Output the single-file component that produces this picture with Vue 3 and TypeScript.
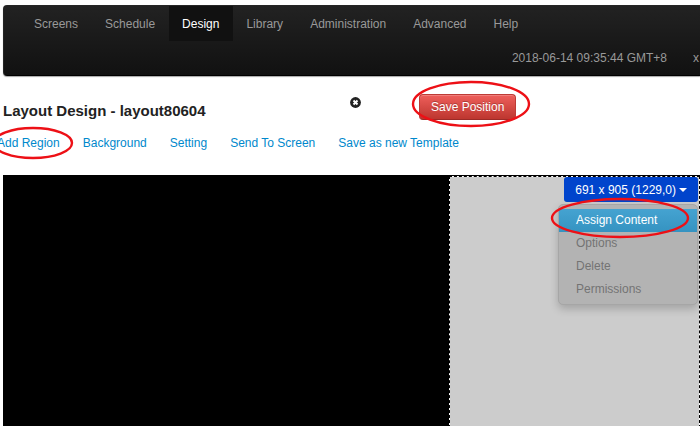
<script setup lang="ts">
import { ref } from 'vue'

const navItems: string[] = ['Screens', 'Schedule', 'Design', 'Library', 'Administration', 'Advanced', 'Help']
const activeNav = ref('Design')

const actions: string[] = ['Add Region', 'Background', 'Setting', 'Send To Screen', 'Save as new Template']

const regionMenu: string[] = ['Assign Content', 'Options', 'Delete', 'Permissions']
const activeOption = ref('Assign Content')
const menuOpen = ref(true)
</script>

<template>
  <div class="page">
    <header class="navbar">
      <nav class="nav">
        <a
          v-for="item in navItems"
          :key="item"
          href="#"
          class="nav-link"
          :class="{ active: item === activeNav }"
          @click.prevent="activeNav = item"
        >{{ item }}</a>
      </nav>
      <div class="status">
        <span>2018-06-14 09:35:44 GMT+8</span>
        <a href="#" class="user">x</a>
      </div>
    </header>

    <div class="title-row">
      <h1>Layout Design - layout80604</h1>
      <button class="close" type="button" aria-label="Close">
        <svg width="11" height="11" viewBox="0 0 11 11">
          <circle cx="5.5" cy="5.5" r="5.4" fill="#222" />
          <path d="M3.5 3.5 7.5 7.5M7.5 3.5 3.5 7.5" stroke="#fff" stroke-width="2" />
        </svg>
      </button>
      <div class="save-wrap">
        <button class="save" type="button">Save Position</button>
        <svg class="mark mark-save" viewBox="0 0 120 48">
          <ellipse cx="60" cy="24" rx="58" ry="22" />
        </svg>
      </div>
    </div>

    <nav class="actions">
      <a v-for="action in actions" :key="action" href="#" @click.prevent>{{ action }}</a>
      <svg class="mark mark-add" viewBox="0 0 82 34">
        <ellipse cx="41" cy="17" rx="39" ry="15" />
      </svg>
    </nav>

    <main class="canvas">
      <section class="region">
        <button class="region-toggle" type="button" :aria-expanded="menuOpen" @click="menuOpen = !menuOpen">
          691 x 905 (1229,0)
          <span class="caret"></span>
        </button>
        <div v-if="menuOpen" class="menu">
          <a
            v-for="option in regionMenu"
            :key="option"
            href="#"
            :class="{ active: option === activeOption }"
            @click.prevent="activeOption = option"
          >{{ option }}</a>
        </div>
        <svg class="mark mark-assign" viewBox="0 0 140 42">
          <ellipse cx="70" cy="21" rx="68" ry="19" />
        </svg>
      </section>
    </main>
  </div>
</template>

<style>
body {
  background: #fff;
  overflow: hidden;
}
</style>

<style scoped>
.page {
  box-sizing: border-box;
  display: flex;
  flex-direction: column;
  min-height: 100vh;
  padding: 5px 0 0 3px;
  font: 12px/18px "Liberation Sans", Arial, sans-serif;
  color: #333;
}

a {
  text-decoration: none;
}

button {
  font: inherit;
  cursor: pointer;
}

.navbar {
  box-sizing: border-box;
  height: 71px;
  border: 1px solid #252525;
  border-right: 0;
  border-bottom-color: #000;
  border-radius: 4px 0 0 4px;
  background: linear-gradient(#222, #111);
  box-shadow: 0 1px 1px rgba(0, 0, 0, 0.35);
  color: #999;
}

.nav {
  display: flex;
  padding-left: 17px;
}

.nav-link {
  padding: 9px 14px 8px 13px;
  color: #999;
}

.nav-link.active {
  background: #111;
  color: #fff;
}

.status {
  display: flex;
  justify-content: flex-end;
  gap: 26px;
  padding: 8px 1px 0 0;
}

.user {
  color: #999;
}

.title-row {
  display: flex;
  align-items: flex-start;
  padding-top: 18px;
}

h1 {
  width: 347px;
  margin: 7px 0 0;
  font-size: 15px;
  line-height: 20px;
  color: #222;
}

.close {
  display: flex;
  margin-top: 3px;
  padding: 0;
  border: 0;
  background: none;
}

.save-wrap {
  position: relative;
  margin-left: 58px;
}

.save {
  display: block;
  height: 26px;
  padding: 0 11px;
  border: 1px solid #bd3b36;
  border-bottom-color: #9c2b27;
  border-radius: 4px;
  background: linear-gradient(#ee5f5b, #bd362f);
  box-shadow: inset 0 1px 0 rgba(255, 255, 255, 0.2);
  color: #fff;
  text-shadow: 0 -1px 0 rgba(0, 0, 0, 0.25);
}

.mark {
  position: absolute;
  fill: none;
  stroke: #ed1016;
  stroke-width: 2.4;
  pointer-events: none;
}

.mark-save {
  top: -14px;
  left: -8px;
  width: 120px;
  height: 48px;
}

.actions {
  position: relative;
  display: flex;
  gap: 23px;
  margin: 13px 0 23px -6px;
}

.actions a {
  color: #08c;
  white-space: nowrap;
}

.mark-add {
  top: -8px;
  left: -5px;
  width: 82px;
  height: 34px;
}

.canvas {
  position: relative;
  flex: 1;
  background: #000;
}

.region {
  position: absolute;
  top: 1px;
  right: 0;
  bottom: -2px;
  left: 64%;
  box-sizing: border-box;
  display: flex;
  flex-direction: column;
  align-items: flex-end;
  padding-right: 1px;
  border: 1px dashed #000;
  background: linear-gradient(#ccc, #ccc) padding-box, #fff;
}

.region-toggle {
  display: flex;
  align-items: center;
  gap: 3px;
  height: 25px;
  padding: 0 11px;
  border: 0;
  border-radius: 3px;
  background: #04c;
  color: #fff;
  white-space: nowrap;
}

.caret {
  border: 4px solid transparent;
  border-top-color: #fff;
  border-bottom: 0;
}

.menu {
  box-sizing: border-box;
  display: flex;
  flex-direction: column;
  width: 140px;
  margin-top: 2px;
  padding: 4px 0 3px;
  border: 1px solid #a6a6a6;
  border-radius: 5px;
  background: #b3b3b3;
  box-shadow: 0 4px 8px rgba(0, 0, 0, 0.2);
}

.menu a {
  padding: 0 17px;
  line-height: 23px;
  color: #737373;
}

.menu a.active {
  background: linear-gradient(#45a3d1, #3593c1);
  color: #fff;
}

.mark-assign {
  top: 20px;
  right: 9px;
  width: 140px;
  height: 42px;
}
</style>
